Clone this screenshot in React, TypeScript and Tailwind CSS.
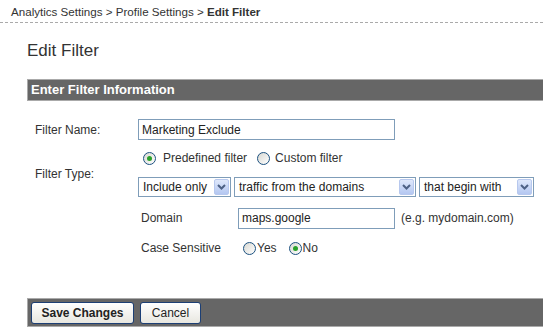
import React from 'react';

const Radio = ({ checked }: { checked?: boolean }) => (
  <span className="flex h-[13px] w-[13px] shrink-0 items-center justify-center rounded-full border border-[#1c5180] bg-linear-to-br from-[#d8d8d2] to-white">
    {checked && <span className="h-[5px] w-[5px] rounded-full bg-[#2aa12a]" />}
  </span>
);

const Select = ({ value, className }: { value: string; className: string }) => (
  <div className={'flex h-[20px] items-center border border-[#7f9db9] bg-white ' + className}>
    <span className="flex-1 pl-[4px] leading-[18px]">{value}</span>
    <span className="mr-[1px] flex h-[16px] w-[15px] items-center justify-center rounded-[2px] border border-[#b7c8ee] bg-linear-to-b from-[#dfe8fb] to-[#b4c7f1]">
      <svg width="9" height="6" viewBox="0 0 9 6">
        <path d="M1 1 L4.5 4.5 L8 1" fill="none" stroke="#4d6185" strokeWidth="2" />
      </svg>
    </span>
  </div>
);

const Button = ({ children, bold }: { children: React.ReactNode; bold?: boolean }) => (
  <button
    type="button"
    className={
      'h-[22px] rounded-[3px] border border-[#1c3f75] bg-linear-to-b from-white to-[#e8e7e0] text-[12px] text-[#222] ' +
      (bold ? 'w-[103px] font-bold' : 'w-[61px]')
    }
  >
    {children}
  </button>
);

export default function App() {
  return (
    <main className="min-h-screen w-[543px] overflow-hidden bg-white font-['Liberation_Sans',Arial,sans-serif] text-[12px] text-[#333]">
      {/* Breadcrumb */}
      <div className="border-b border-dashed border-[#aaa] pb-[3px] pl-[11px] pt-[5px] text-[11.6px] leading-[14px] text-[#333]">
        Analytics Settings &gt; Profile Settings &gt; <span className="font-bold">Edit Filter</span>
      </div>

      <div className="ml-[27px]">
        <h1 className="mt-[18px] text-[17px] leading-[20px] font-normal text-[#333]">Edit Filter</h1>

        {/* Section header */}
        <div className="mt-[18px] flex h-[22px] items-center border-y border-l border-[#aaa] bg-[#666] pl-[3px] text-[13px] leading-[18px] font-bold text-white">
          Enter Filter Information
        </div>

        {/* Filter name */}
        <div className="mt-[18px] flex h-[21px] items-center">
          <span className="w-[111px] pl-[8px]">Filter Name:</span>
          <div className="flex h-[21px] w-[257px] items-center border border-[#7f9db9] pl-[3px] text-[#222]">
            Marketing Exclude
          </div>
        </div>

        {/* Filter type */}
        <div className="flex">
          <span className="w-[111px] pl-[8px] pt-[27px] leading-[15px]">Filter Type:</span>
          <div className="flex flex-col">
            <div className="mt-[8px] flex h-[20px] items-center pl-[5px]">
              <Radio checked />
              <span className="ml-[7px]">Predefined filter</span>
              <span className="ml-[10px]">
                <Radio />
              </span>
              <span className="ml-[5px]">Custom filter</span>
            </div>

            <div className="mt-[9px] flex gap-[3px] text-[#222]">
              <Select value="Include only" className="w-[93px]" />
              <Select value="traffic from the domains" className="w-[182px]" />
              <Select value="that begin with" className="w-[115px]" />
            </div>

            <div className="mt-[11px] flex h-[20px] items-center">
              <span className="w-[100px] pl-[3px]">Domain</span>
              <div className="flex h-[21px] w-[157px] items-center border border-[#7f9db9] pl-[3px] text-[#222]">
                maps.google
              </div>
              <span className="ml-[6px]">(e.g. mydomain.com)</span>
            </div>

            <div className="mt-[10px] flex h-[20px] items-center">
              <span className="w-[100px] pl-[3px]">Case Sensitive</span>
              <span className="ml-[5px]">
                <Radio />
              </span>
              <span className="ml-[1px]">Yes</span>
              <span className="ml-[12px]">
                <Radio checked />
              </span>
              <span className="ml-[1px]">No</span>
            </div>
          </div>
        </div>

        {/* Footer actions */}
        <div className="mt-[40px] flex h-[29px] items-center gap-[6px] border-y border-l border-[#aaa] bg-[#666] pl-[3px]">
          <Button bold>Save Changes</Button>
          <Button>Cancel</Button>
        </div>
      </div>
    </main>
  );
}
